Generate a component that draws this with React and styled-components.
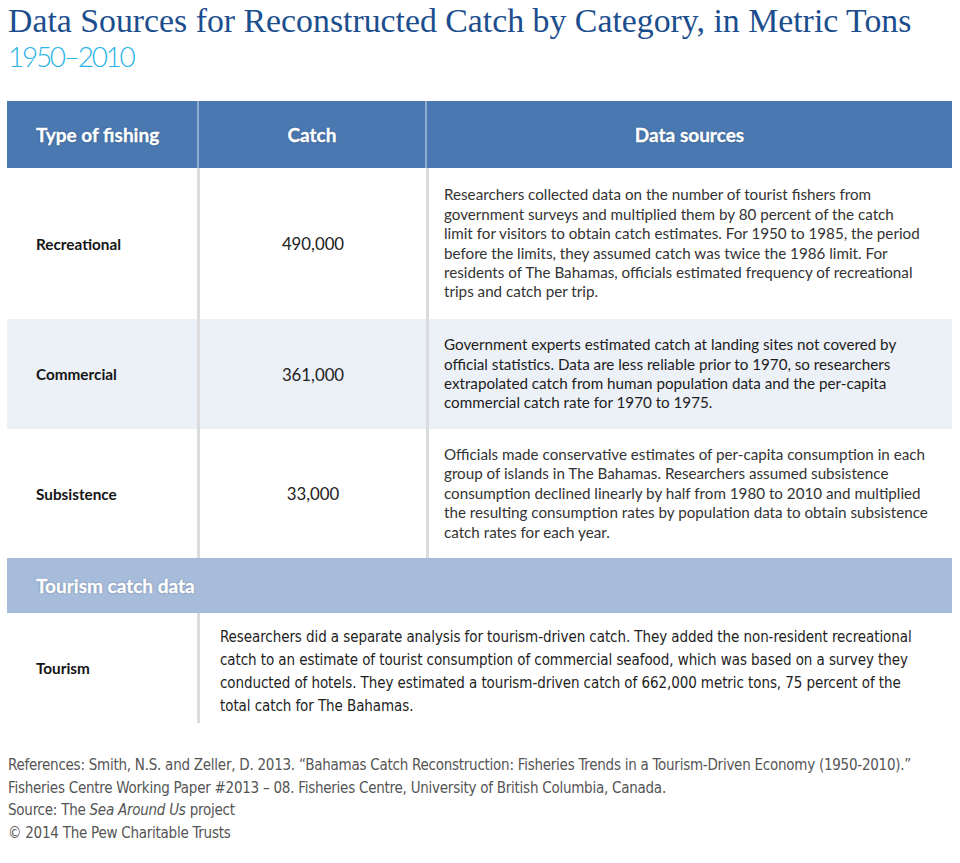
import React from 'react';
import styled, { createGlobalStyle } from 'styled-components';

const GlobalStyle = createGlobalStyle`
  body {
    margin: 0;
    background: #ffffff;
  }
`;

const Page = styled.div`
  width: 960px;
  padding: 3px 8px 20px 7px;
  box-sizing: border-box;
`;

const Title = styled.h1`
  margin: 0 0 0 1px;
  font-family: "Liberation Serif", serif;
  font-weight: 400;
  font-size: 33.8px;
  line-height: 36px;
  color: #1c4e8e;
  white-space: nowrap;
`;

const Years = styled.div`
  margin-left: 1px;
  font-family: Lato, sans-serif;
  font-weight: 300;
  font-size: 28px;
  line-height: 34px;
  letter-spacing: -2.3px;
  color: #2bb4e6;
`;

const Table = styled.div`
  margin-top: 28px;
  width: 945px;
  font-family: Lato, sans-serif;
`;

const Row = styled.div`
  display: flex;
  height: ${(p) => p.$h}px;
  background: ${(p) => p.$bg || '#ffffff'};
`;

const HeadCell = styled.div`
  width: ${(p) => (p.$w ? `${p.$w}px` : 'auto')};
  flex: ${(p) => (p.$w ? 'none' : '1')};
  display: flex;
  align-items: center;
  justify-content: ${(p) => (p.$center ? 'center' : 'flex-start')};
  padding-left: ${(p) => (p.$center ? 0 : 29)}px;
  box-sizing: border-box;
  border-left: ${(p) => (p.$divider ? '2px solid #8eaad0' : 'none')};
  color: #ffffff;
  font-weight: 700;
  font-size: 19px;
  -webkit-text-stroke: 0.35px #ffffff;
  text-shadow: 0 0 2px rgba(10, 30, 70, 0.55);
`;

const Cell = styled.div`
  width: ${(p) => (p.$w ? `${p.$w}px` : 'auto')};
  flex: ${(p) => (p.$w ? 'none' : '1')};
  display: flex;
  align-items: center;
  justify-content: ${(p) => (p.$center ? 'center' : 'flex-start')};
  padding-left: ${(p) => p.$pl || 0}px;
  box-sizing: border-box;
  border-left: ${(p) => (p.$divider ? '3px solid #dcdcde' : 'none')};
`;

const Label = styled.span`
  font-weight: 700;
  font-size: 15.3px;
  color: #151515;
`;

const Amount = styled.span`
  font-size: 16.8px;
  color: #222222;
`;

const Para = styled.p`
  margin: 0;
  font-size: 15.2px;
  line-height: 19.4px;
  color: ${(p) => p.$color || '#333333'};
  white-space: nowrap;
`;

const NarrowPara = styled.p`
  margin: 8px 0 0;
  font-family: "Liberation Sans Narrow", "DejaVu Sans Condensed", "Arial Narrow", sans-serif;
  font-size: 15px;
  line-height: 23px;
  letter-spacing: -0.08px;
  color: #1e1e1e;
  white-space: nowrap;
`;

const Footer = styled.div`
  margin-top: 31px;
  margin-left: 1px;
  font-family: "Liberation Sans Narrow", "DejaVu Sans Condensed", "Arial Narrow", sans-serif;
  font-size: 15px;
  line-height: 22.7px;
  letter-spacing: -0.25px;
  color: #555555;
  white-space: nowrap;
`;

const rows = [
  {
    type: 'Recreational',
    catch: '490,000',
    h: 151,
    bg: '#ffffff',
    color: '#333333',
    lines: [
      'Researchers collected data on the number of tourist fishers from',
      'government surveys and multiplied them by 80 percent of the catch',
      'limit for visitors to obtain catch estimates. For 1950 to 1985, the period',
      'before the limits, they assumed catch was twice the 1986 limit. For',
      'residents of The Bahamas, officials estimated frequency of recreational',
      'trips and catch per trip.',
    ],
  },
  {
    type: 'Commercial',
    catch: '361,000',
    h: 110,
    bg: '#ecf0f7',
    color: '#1c1c1c',
    lines: [
      'Government experts estimated catch at landing sites not covered by',
      'official statistics. Data are less reliable prior to 1970, so researchers',
      'extrapolated catch from human population data and the per-capita',
      'commercial catch rate for 1970 to 1975.',
    ],
  },
  {
    type: 'Subsistence',
    catch: '33,000',
    h: 129,
    bg: '#ffffff',
    color: '#333333',
    lines: [
      'Officials made conservative estimates of per-capita consumption in each',
      'group of islands in The Bahamas. Researchers assumed subsistence',
      'consumption declined linearly by half from 1980 to 2010 and multiplied',
      'the resulting consumption rates by population data to obtain subsistence',
      'catch rates for each year.',
    ],
  },
];

const tourismLines = [
  'Researchers did a separate analysis for tourism-driven catch. They added the non-resident recreational',
  'catch to an estimate of tourist consumption of commercial seafood, which was based on a survey they',
  'conducted of hotels. They estimated a tourism-driven catch of 662,000 metric tons, 75 percent of the',
  'total catch for The Bahamas.',
];

const withBreaks = (lines) =>
  lines.map((line, i) => (
    <React.Fragment key={i}>
      {line}
      {i < lines.length - 1 && <br />}
    </React.Fragment>
  ));

export default function App() {
  return (
    <Page>
      <GlobalStyle />
      <Title>Data Sources for Reconstructed Catch by Category, in Metric Tons</Title>
      <Years>1950–2010</Years>

      <Table>
        <Row $h={67} $bg="#4a78b0">
          <HeadCell $w={190}>Type of fishing</HeadCell>
          <HeadCell $w={228} $center $divider>Catch</HeadCell>
          <HeadCell $center $divider>Data sources</HeadCell>
        </Row>

        {rows.map((r) => (
          <Row key={r.type} $h={r.h} $bg={r.bg}>
            <Cell $w={190} $pl={29}>
              <Label>{r.type}</Label>
            </Cell>
            <Cell $w={229} $center $divider>
              <Amount>{r.catch}</Amount>
            </Cell>
            <Cell $pl={15} $divider>
              <Para $color={r.color}>{withBreaks(r.lines)}</Para>
            </Cell>
          </Row>
        ))}

        <Row $h={55} $bg="#a7bcda">
          <HeadCell>Tourism catch data</HeadCell>
        </Row>

        <Row $h={110}>
          <Cell $w={190} $pl={29}>
            <Label>Tourism</Label>
          </Cell>
          <Cell $pl={20} $divider>
            <NarrowPara>{withBreaks(tourismLines)}</NarrowPara>
          </Cell>
        </Row>
      </Table>

      <Footer>
        References: Smith, N.S. and Zeller, D. 2013. “Bahamas Catch Reconstruction: Fisheries Trends in a Tourism-Driven Economy (1950-2010).”
        <br />
        Fisheries Centre Working Paper #2013 – 08. Fisheries Centre, University of British Columbia, Canada.
        <br />
        Source: The <i>Sea Around Us</i> project
        <br />
        © 2014 The Pew Charitable Trusts
      </Footer>
    </Page>
  );
}
